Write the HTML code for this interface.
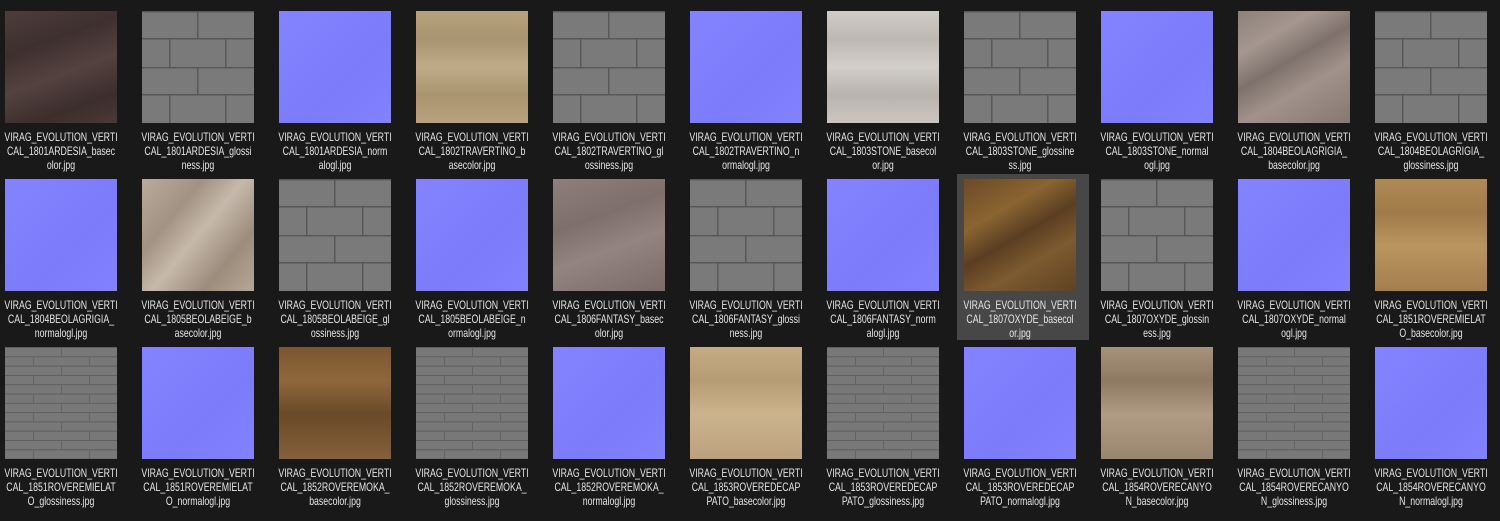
<!DOCTYPE html>
<html><head><meta charset="utf-8"><style>
html,body{margin:0;padding:0;background:#191919;width:1500px;height:521px;overflow:hidden;font-family:"Liberation Sans",sans-serif}
.t{position:absolute;width:112px;height:112px}
.i{position:absolute;left:0;top:0;width:112px;height:112px}
.i svg{display:block}
.l{position:absolute;left:-44px;top:119px;width:200px;text-align:center;color:#e6e6e6;font-size:12px;line-height:14px;white-space:nowrap;transform:scaleX(0.73);transform-origin:100px 0}
.sel{position:absolute;left:957px;top:174px;width:132px;height:166px;background:#474747}
.b{background:linear-gradient(135deg,#8483ff,#7c7cfb 60%,#8282ff)}
.n1{background:linear-gradient(160deg,#4d3d3b,#3e302f 30%,#54423f 55%,#3b2e2d 80%,#4a3a37)}
.n2{background:linear-gradient(180deg,#b7a27c,#a99471 25%,#bfab88 50%,#a9946f 75%,#b8a37e)}
.n3{background:linear-gradient(180deg,#cfcbc7,#bdb8b3 25%,#d2cecb 50%,#b8b3ae 75%,#cbc6c1)}
.n4{background:linear-gradient(150deg,#8d8079,#a59790 25%,#7e716b 45%,#a1938b 65%,#857870)}
.n5{background:linear-gradient(130deg,#b9ab9c,#a29282 30%,#c6b9ab 50%,#9c8c7c 75%,#b5a797)}
.n6{background:linear-gradient(160deg,#8e7f7c,#7e6f6c 35%,#938481 60%,#7a6b68)}
.n7{background:linear-gradient(150deg,#6b4a26,#8a6432 30%,#5a3e22 50%,#7d5a30 70%,#5e4224)}
.n8{background:linear-gradient(180deg,#b08a55,#a07a48 30%,#bb955e 60%,#a47e4c)}
.n9{background:linear-gradient(180deg,#7b5632,#8f673c 30%,#6a4a2a 60%,#84603a)}
.n10{background:linear-gradient(180deg,#c4ab84,#b69c74 30%,#cbb38d 60%,#bba27c)}
.n11{background:linear-gradient(180deg,#a6927a,#8e7a62 30%,#b09c84 60%,#9a866e)}
</style></head><body>
<svg width="0" height="0" style="position:absolute"><defs>
<pattern id="p1" patternUnits="userSpaceOnUse" width="112" height="56">
<rect width="112" height="56" fill="#7a7a7a"/>
<rect y="0" width="112" height="1.5" fill="#585858"/><rect y="27" width="112" height="1.5" fill="#585858"/>
<rect x="55" y="0" width="1.5" height="28" fill="#585858"/>
<rect x="27" y="28" width="1.5" height="28" fill="#585858"/><rect x="83" y="28" width="1.5" height="28" fill="#585858"/>
</pattern>
<pattern id="p3" patternUnits="userSpaceOnUse" width="112" height="18.6">
<rect width="112" height="18.6" fill="#787878"/>
<rect y="0" width="112" height="1" fill="#5e5e5e"/><rect y="9.3" width="112" height="1" fill="#5e5e5e"/>
<rect x="56" y="0" width="1" height="9.3" fill="#646464"/>
<rect x="28" y="9.3" width="1" height="9.3" fill="#646464"/><rect x="84" y="9.3" width="1" height="9.3" fill="#646464"/>
</pattern>
</defs></svg>
<div class="sel"></div>

<!-- row 1 -->
<div class="t" style="left:5px;top:11px"><div class="i n1"></div><div class="l">VIRAG_EVOLUTION_VERTI<br>CAL_1801ARDESIA_basec<br>olor.jpg</div></div>
<div class="t" style="left:142px;top:11px"><div class="i"><svg width="112" height="112"><rect width="112" height="112" fill="url(#p1)"/></svg></div><div class="l">VIRAG_EVOLUTION_VERTI<br>CAL_1801ARDESIA_glossi<br>ness.jpg</div></div>
<div class="t" style="left:279px;top:11px"><div class="i b"></div><div class="l">VIRAG_EVOLUTION_VERTI<br>CAL_1801ARDESIA_norm<br>alogl.jpg</div></div>
<div class="t" style="left:416px;top:11px"><div class="i n2"></div><div class="l">VIRAG_EVOLUTION_VERTI<br>CAL_1802TRAVERTINO_b<br>asecolor.jpg</div></div>
<div class="t" style="left:553px;top:11px"><div class="i"><svg width="112" height="112"><rect width="112" height="112" fill="url(#p1)"/></svg></div><div class="l">VIRAG_EVOLUTION_VERTI<br>CAL_1802TRAVERTINO_gl<br>ossiness.jpg</div></div>
<div class="t" style="left:690px;top:11px"><div class="i b"></div><div class="l">VIRAG_EVOLUTION_VERTI<br>CAL_1802TRAVERTINO_n<br>ormalogl.jpg</div></div>
<div class="t" style="left:827px;top:11px"><div class="i n3"></div><div class="l">VIRAG_EVOLUTION_VERTI<br>CAL_1803STONE_basecol<br>or.jpg</div></div>
<div class="t" style="left:964px;top:11px"><div class="i"><svg width="112" height="112"><rect width="112" height="112" fill="url(#p1)"/></svg></div><div class="l">VIRAG_EVOLUTION_VERTI<br>CAL_1803STONE_glossine<br>ss.jpg</div></div>
<div class="t" style="left:1101px;top:11px"><div class="i b"></div><div class="l">VIRAG_EVOLUTION_VERTI<br>CAL_1803STONE_normal<br>ogl.jpg</div></div>
<div class="t" style="left:1238px;top:11px"><div class="i n4"></div><div class="l">VIRAG_EVOLUTION_VERTI<br>CAL_1804BEOLAGRIGIA_<br>basecolor.jpg</div></div>
<div class="t" style="left:1375px;top:11px"><div class="i"><svg width="112" height="112"><rect width="112" height="112" fill="url(#p1)"/></svg></div><div class="l">VIRAG_EVOLUTION_VERTI<br>CAL_1804BEOLAGRIGIA_<br>glossiness.jpg</div></div>

<!-- row 2 -->
<div class="t" style="left:5px;top:179px"><div class="i b"></div><div class="l">VIRAG_EVOLUTION_VERTI<br>CAL_1804BEOLAGRIGIA_<br>normalogl.jpg</div></div>
<div class="t" style="left:142px;top:179px"><div class="i n5"></div><div class="l">VIRAG_EVOLUTION_VERTI<br>CAL_1805BEOLABEIGE_b<br>asecolor.jpg</div></div>
<div class="t" style="left:279px;top:179px"><div class="i"><svg width="112" height="112"><rect width="112" height="112" fill="url(#p1)"/></svg></div><div class="l">VIRAG_EVOLUTION_VERTI<br>CAL_1805BEOLABEIGE_gl<br>ossiness.jpg</div></div>
<div class="t" style="left:416px;top:179px"><div class="i b"></div><div class="l">VIRAG_EVOLUTION_VERTI<br>CAL_1805BEOLABEIGE_n<br>ormalogl.jpg</div></div>
<div class="t" style="left:553px;top:179px"><div class="i n6"></div><div class="l">VIRAG_EVOLUTION_VERTI<br>CAL_1806FANTASY_basec<br>olor.jpg</div></div>
<div class="t" style="left:690px;top:179px"><div class="i"><svg width="112" height="112"><rect width="112" height="112" fill="url(#p1)"/></svg></div><div class="l">VIRAG_EVOLUTION_VERTI<br>CAL_1806FANTASY_glossi<br>ness.jpg</div></div>
<div class="t" style="left:827px;top:179px"><div class="i b"></div><div class="l">VIRAG_EVOLUTION_VERTI<br>CAL_1806FANTASY_norm<br>alogl.jpg</div></div>
<div class="t" style="left:964px;top:179px"><div class="i n7"></div><div class="l">VIRAG_EVOLUTION_VERTI<br>CAL_1807OXYDE_basecol<br>or.jpg</div></div>
<div class="t" style="left:1101px;top:179px"><div class="i"><svg width="112" height="112"><rect width="112" height="112" fill="url(#p1)"/></svg></div><div class="l">VIRAG_EVOLUTION_VERTI<br>CAL_1807OXYDE_glossin<br>ess.jpg</div></div>
<div class="t" style="left:1238px;top:179px"><div class="i b"></div><div class="l">VIRAG_EVOLUTION_VERTI<br>CAL_1807OXYDE_normal<br>ogl.jpg</div></div>
<div class="t" style="left:1375px;top:179px"><div class="i n8"></div><div class="l">VIRAG_EVOLUTION_VERTI<br>CAL_1851ROVEREMIELAT<br>O_basecolor.jpg</div></div>

<!-- row 3 -->
<div class="t" style="left:5px;top:347px"><div class="i"><svg width="112" height="112"><rect width="112" height="112" fill="url(#p3)"/></svg></div><div class="l">VIRAG_EVOLUTION_VERTI<br>CAL_1851ROVEREMIELAT<br>O_glossiness.jpg</div></div>
<div class="t" style="left:142px;top:347px"><div class="i b"></div><div class="l">VIRAG_EVOLUTION_VERTI<br>CAL_1851ROVEREMIELAT<br>O_normalogl.jpg</div></div>
<div class="t" style="left:279px;top:347px"><div class="i n9"></div><div class="l">VIRAG_EVOLUTION_VERTI<br>CAL_1852ROVEREMOKA_<br>basecolor.jpg</div></div>
<div class="t" style="left:416px;top:347px"><div class="i"><svg width="112" height="112"><rect width="112" height="112" fill="url(#p3)"/></svg></div><div class="l">VIRAG_EVOLUTION_VERTI<br>CAL_1852ROVEREMOKA_<br>glossiness.jpg</div></div>
<div class="t" style="left:553px;top:347px"><div class="i b"></div><div class="l">VIRAG_EVOLUTION_VERTI<br>CAL_1852ROVEREMOKA_<br>normalogl.jpg</div></div>
<div class="t" style="left:690px;top:347px"><div class="i n10"></div><div class="l">VIRAG_EVOLUTION_VERTI<br>CAL_1853ROVEREDECAP<br>PATO_basecolor.jpg</div></div>
<div class="t" style="left:827px;top:347px"><div class="i"><svg width="112" height="112"><rect width="112" height="112" fill="url(#p3)"/></svg></div><div class="l">VIRAG_EVOLUTION_VERTI<br>CAL_1853ROVEREDECAP<br>PATO_glossiness.jpg</div></div>
<div class="t" style="left:964px;top:347px"><div class="i b"></div><div class="l">VIRAG_EVOLUTION_VERTI<br>CAL_1853ROVEREDECAP<br>PATO_normalogl.jpg</div></div>
<div class="t" style="left:1101px;top:347px"><div class="i n11"></div><div class="l">VIRAG_EVOLUTION_VERTI<br>CAL_1854ROVERECANYO<br>N_basecolor.jpg</div></div>
<div class="t" style="left:1238px;top:347px"><div class="i"><svg width="112" height="112"><rect width="112" height="112" fill="url(#p3)"/></svg></div><div class="l">VIRAG_EVOLUTION_VERTI<br>CAL_1854ROVERECANYO<br>N_glossiness.jpg</div></div>
<div class="t" style="left:1375px;top:347px"><div class="i b"></div><div class="l">VIRAG_EVOLUTION_VERTI<br>CAL_1854ROVERECANYO<br>N_normalogl.jpg</div></div>
</body></html>
